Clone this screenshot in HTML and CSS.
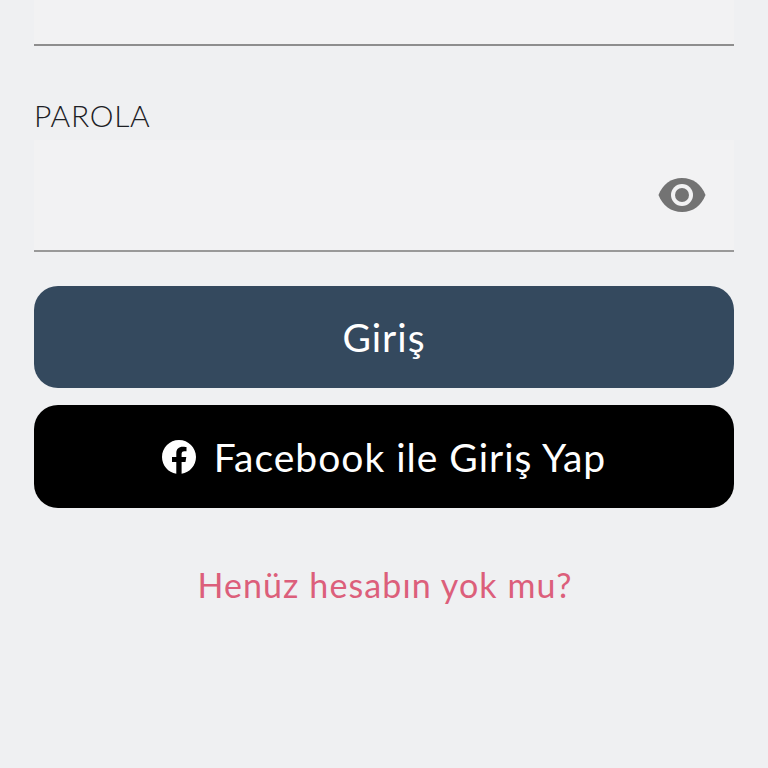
FILE: index.html
```html
<!DOCTYPE html>
<html lang="tr">
<head>
<meta charset="utf-8">
<title>Giriş</title>
<link rel="stylesheet" href="styles.css">
</head>
<body>
<main class="form">
  <div class="input input-top"></div>
  <label class="label">PAROLA</label>
  <div class="input input-password">
    <svg class="eye" viewBox="0 0 48 34" aria-hidden="true">
      <path class="eye-shape" d="M24 0C13 0 4.500 6.500 0.500 17C4.500 27.500 13 34 24 34S43.500 27.500 47.500 17C43.500 6.500 35 0 24 0Z"/>
      <circle class="eye-ring" cx="24" cy="17" r="11"/>
      <circle class="eye-shape" cx="24" cy="17" r="7"/>
    </svg>
  </div>
  <button class="btn btn-primary">Giriş</button>
  <button class="btn btn-facebook">
    <svg class="fb" viewBox="0 0 34 34" aria-hidden="true">
      <path class="fb-shape" d="M34 17C34 7.600 26.400 0 17 0S0 7.600 0 17C0 25.500 6.200 32.500 14.300 33.800V21.900H10V17H14.300V13.300C14.300 9 16.800 6.700 20.700 6.700C22.600 6.700 24.500 7 24.500 7V11.200H22.400C20.200 11.200 19.600 12.500 19.600 13.900V17H24.300L23.500 21.900H19.600V33.800C27.800 32.500 34 25.500 34 17Z"/>
    </svg>
    <span>Facebook ile Giriş Yap</span>
  </button>
  <a class="signup" href="#">Henüz hesabın yok mu?</a>
</main>
</body>
</html>
```

FILE: styles.css
```css
* { box-sizing: border-box; }
html, body { margin: 0; height: 100%; }
body {
  background: #eff0f2;
  font-family: "Lato", "Noto Sans", sans-serif;
  overflow: hidden;
}
.form {
  display: flex;
  flex-direction: column;
  padding: 0 34px;
}
.input {
  background: #f2f2f3;
  border-bottom: 2px solid #8e8e8e;
}
.input-top { height: 46px; }
.label {
  margin-top: 52px;
  height: 42px;
  font-size: 30px;
  font-weight: 300;
  line-height: 34px;
  letter-spacing: 0.7px;
  color: #1d2025;
}
.input-password {
  height: 112px;
  display: flex;
  align-items: center;
  justify-content: flex-end;
  padding: 0 28px 0 0;
  border-bottom-color: #999;
}
.eye { width: 48px; height: 34px; }
.eye-shape { fill: #737373; }
.eye-ring { fill: #f2f2f3; }
.btn {
  height: 102px;
  border: 0;
  border-radius: 24px;
  color: #fff;
  font: inherit;
  font-size: 39px;
  letter-spacing: 1px;
  display: flex;
  align-items: center;
  justify-content: center;
  gap: 18px;
  padding: 0;
}
.btn-primary { background: #34495e; margin-top: 34px; }
.btn-facebook { background: #000; margin-top: 17px; height: 103px; }
.fb { width: 34px; height: 34px; }
.fb-shape { fill: #fff; }
.signup {
  margin-top: 53px;
  padding-left: 2px;
  text-align: center;
  font-size: 34px;
  line-height: 48px;
  letter-spacing: 1.1px;
  color: #dc5f7b;
  text-decoration: none;
}
```
